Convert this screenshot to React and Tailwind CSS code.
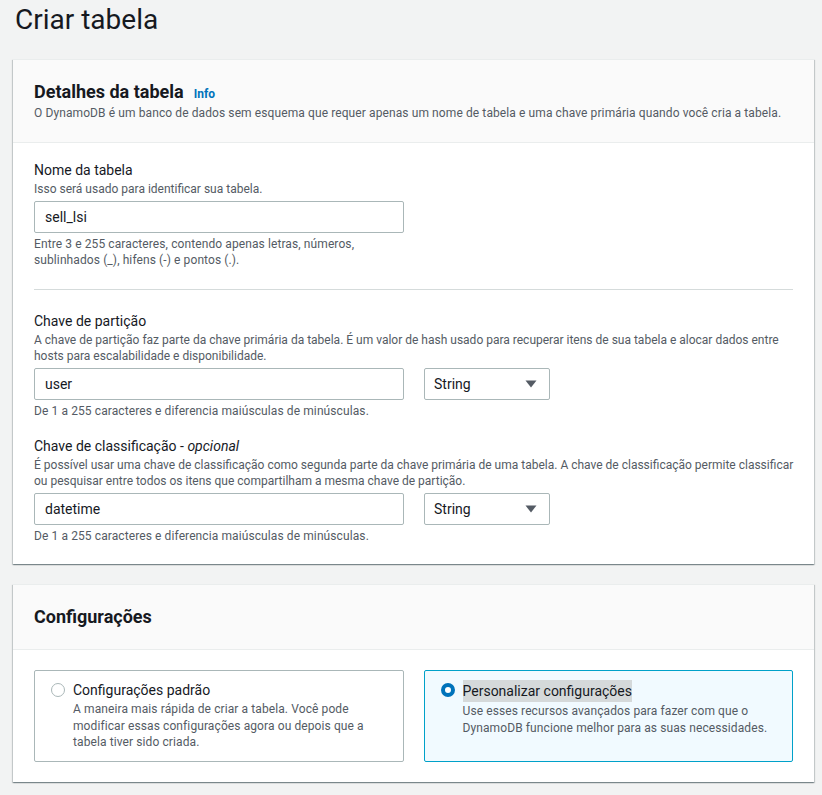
import { useState } from "react";

// Criar tabela - DynamoDB create table form
const font = { fontFamily: "Roboto, 'Liberation Sans', sans-serif" };

const Field = ({ label, hint, children }) => (
  <div>
    <div className="text-[14px] leading-[22px] text-[#16191f]">{label}</div>
    {hint && <div className="text-[12px] leading-[16px] text-[#545b64] whitespace-nowrap">{hint}</div>}
    {children}
  </div>
);

const TextInput = ({ value }) => (
  <div className="w-[370px] h-[32px] border border-[#aab7b8] rounded-[2px] bg-white px-[10px] flex items-center text-[14px] text-[#16191f]">
    {value}
  </div>
);

const TypeSelect = () => (
  <div className="w-[126px] h-[32px] border border-[#aab7b8] rounded-[2px] bg-white pl-[9px] pr-[12px] flex items-center justify-between text-[14px] text-[#16191f]">
    <span>String</span>
    <svg width="12" height="8" viewBox="0 0 12 8">
      <path d="M0.5 0.5 L11.5 0.5 L6 7.5 Z" fill="#545b64" />
    </svg>
  </div>
);

const cardShadow =
  "shadow-[0_1px_1px_0_rgba(0,28,36,0.3),1px_1px_1px_0_rgba(0,28,36,0.15),-1px_1px_1px_0_rgba(0,28,36,0.15)]";

export default function App() {
  const [mode, setMode] = useState("custom");

  return (
    <div className="min-h-[795px] bg-[#f2f3f3] pl-[13px] pr-[8px] pb-[12px]" style={font}>
      {/* Title */}
      <h1 className="text-[28px] leading-[36px] pt-[2px] pl-[2px] text-[#16191f] h-[59px]">Criar tabela</h1>

      {/* Detalhes da tabela */}
      <div className={`bg-white border-t border-[#eaeded] ${cardShadow}`}>
        <div className="bg-[#fafafa] border-b border-[#eaeded] px-[21px] pt-[21px] pb-[21px]">
          <div className="flex items-baseline gap-[10px]">
            <h2 className="text-[18px] leading-[22px] font-bold text-[#16191f]">Detalhes da tabela</h2>
            <span className="text-[12px] font-bold text-[#0073bb]">Info</span>
          </div>
          <p className="text-[12px] leading-[16px] tracking-[0.1px] text-[#545b64] mt-[2px] whitespace-nowrap">
            O DynamoDB é um banco de dados sem esquema que requer apenas um nome de tabela e uma chave primária quando você cria a tabela.
          </p>
        </div>

        <div className="px-[21px] pt-[16px] pb-[20px]">
          <Field label="Nome da tabela" hint="Isso será usado para identificar sua tabela.">
            <div className="mt-[4px]">
              <TextInput value="sell_lsi" />
            </div>
            <p className="text-[12px] leading-[16px] tracking-[0.1px] text-[#545b64] mt-[3px]">
              Entre 3 e 255 caracteres, contendo apenas letras, números,
              <br />
              sublinhados (_), hifens (-) e pontos (.).
            </p>
          </Field>

          <div className="border-t border-[#d5dbdb] mt-[21px] mb-[20px]" />

          <Field
            label="Chave de partição"
            hint={
              <>
                A chave de partição faz parte da chave primária da tabela. É um valor de hash usado para recuperar itens de sua tabela e alocar dados entre
                <br />
                hosts para escalabilidade e disponibilidade.
              </>
            }
          >
            <div className="mt-[4px] flex gap-[20px]">
              <TextInput value="user" />
              <TypeSelect />
            </div>
            <p className="text-[12px] leading-[16px] tracking-[0.1px] text-[#545b64] mt-[3px]">
              De 1 a 255 caracteres e diferencia maiúsculas de minúsculas.
            </p>
          </Field>

          <div className="mt-[16px]">
            <Field
              label={
                <>
                  Chave de classificação - <i>opcional</i>
                </>
              }
              hint={
                <>
                  É possível usar uma chave de classificação como segunda parte da chave primária de uma tabela. A chave de classificação permite classificar
                  <br />
                  ou pesquisar entre todos os itens que compartilham a mesma chave de partição.
                </>
              }
            >
              <div className="mt-[4px] flex gap-[20px]">
                <TextInput value="datetime" />
                <TypeSelect />
              </div>
              <p className="text-[12px] leading-[16px] tracking-[0.1px] text-[#545b64] mt-[3px]">
                De 1 a 255 caracteres e diferencia maiúsculas de minúsculas.
              </p>
            </Field>
          </div>
        </div>
      </div>

      {/* Configurações */}
      <div className={`mt-[20px] bg-white border-t border-[#eaeded] ${cardShadow}`}>
        <div className="bg-[#fafafa] border-b border-[#eaeded] px-[21px] pt-[21px] pb-[21px]">
          <h2 className="text-[18px] leading-[22px] font-bold text-[#16191f]">Configurações</h2>
        </div>
        <div className="px-[21px] pt-[20px] pb-[20px] grid grid-cols-2 gap-[20px]">
          <button
            onClick={() => setMode("default")}
            className={`h-[92px] text-left border rounded-[2px] px-[16px] pt-[8px] flex items-start gap-[8px] ${
              mode === "default" ? "bg-[#f1faff] border-[#00a1c9]" : "bg-white border-[#aab7b8]"
            }`}
          >
            <span
              className={`mt-[4px] w-[14px] h-[14px] rounded-full shrink-0 ${
                mode === "default" ? "border-[4px] border-[#0073bb] bg-white" : "border border-[#aab7b8] bg-white"
              }`}
            />
            <span>
              <span className="block text-[14px] leading-[22px] text-[#16191f]">Configurações padrão</span>
              <span className="block text-[12px] leading-[16.5px] tracking-[0.1px] text-[#545b64] whitespace-nowrap">
                A maneira mais rápida de criar a tabela. Você pode
                <br />
                modificar essas configurações agora ou depois que a
                <br />
                tabela tiver sido criada.
              </span>
            </span>
          </button>

          <button
            onClick={() => setMode("custom")}
            className={`h-[92px] text-left border rounded-[2px] px-[16px] pt-[8px] flex items-start gap-[8px] ${
              mode === "custom" ? "bg-[#f1faff] border-[#00a1c9]" : "bg-white border-[#aab7b8]"
            }`}
          >
            <span
              className={`mt-[4px] w-[14px] h-[14px] rounded-full shrink-0 ${
                mode === "custom" ? "border-[4px] border-[#0073bb] bg-white" : "border border-[#aab7b8] bg-white"
              }`}
            />
            <span>
              <span className="inline-block text-[14px] leading-[22px] text-[#16191f] bg-[#d5d9da]">Personalizar configurações</span>
              <span className="block text-[12px] leading-[16.5px] tracking-[0.1px] text-[#545b64] whitespace-nowrap">
                Use esses recursos avançados para fazer com que o
                <br />
                DynamoDB funcione melhor para as suas necessidades.
              </span>
            </span>
          </button>
        </div>
      </div>
    </div>
  );
}
